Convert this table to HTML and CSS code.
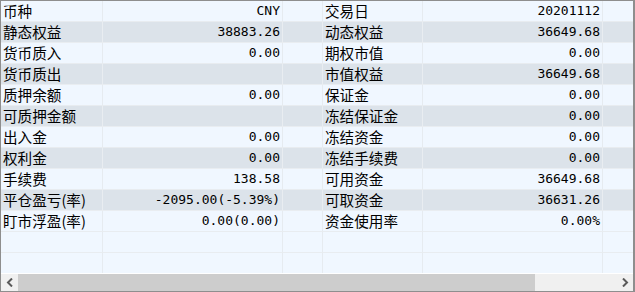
FILE: index.html
```html
<!DOCTYPE html>
<html lang="zh-CN">
<head>
<meta charset="utf-8">
<title>资金</title>
<link rel="stylesheet" href="styles.css">
</head>
<body>
<div class="panel">
  <div class="rows">
    <div class="row"><div class="c lbl">币种</div><div class="c val">CNY</div><div class="c gap"></div><div class="c lbl">交易日</div><div class="c val">20201112</div><div class="c tail"></div></div>
    <div class="row alt"><div class="c lbl">静态权益</div><div class="c val">38883.26</div><div class="c gap"></div><div class="c lbl">动态权益</div><div class="c val">36649.68</div><div class="c tail"></div></div>
    <div class="row"><div class="c lbl">货币质入</div><div class="c val">0.00</div><div class="c gap"></div><div class="c lbl">期权市值</div><div class="c val">0.00</div><div class="c tail"></div></div>
    <div class="row alt"><div class="c lbl">货币质出</div><div class="c val"></div><div class="c gap"></div><div class="c lbl">市值权益</div><div class="c val">36649.68</div><div class="c tail"></div></div>
    <div class="row"><div class="c lbl">质押余额</div><div class="c val">0.00</div><div class="c gap"></div><div class="c lbl">保证金</div><div class="c val">0.00</div><div class="c tail"></div></div>
    <div class="row alt"><div class="c lbl">可质押金额</div><div class="c val"></div><div class="c gap"></div><div class="c lbl">冻结保证金</div><div class="c val">0.00</div><div class="c tail"></div></div>
    <div class="row"><div class="c lbl">出入金</div><div class="c val">0.00</div><div class="c gap"></div><div class="c lbl">冻结资金</div><div class="c val">0.00</div><div class="c tail"></div></div>
    <div class="row alt"><div class="c lbl">权利金</div><div class="c val">0.00</div><div class="c gap"></div><div class="c lbl">冻结手续费</div><div class="c val">0.00</div><div class="c tail"></div></div>
    <div class="row"><div class="c lbl">手续费</div><div class="c val">138.58</div><div class="c gap"></div><div class="c lbl">可用资金</div><div class="c val">36649.68</div><div class="c tail"></div></div>
    <div class="row alt"><div class="c lbl">平仓盈亏(率)</div><div class="c val">-2095.00(-5.39%)</div><div class="c gap"></div><div class="c lbl">可取资金</div><div class="c val">36631.26</div><div class="c tail"></div></div>
    <div class="row"><div class="c lbl">盯市浮盈(率)</div><div class="c val">0.00(0.00)</div><div class="c gap"></div><div class="c lbl">资金使用率</div><div class="c val">0.00%</div><div class="c tail"></div></div>
    <div class="row"><div class="c lbl"></div><div class="c val"></div><div class="c gap"></div><div class="c lbl"></div><div class="c val"></div><div class="c tail"></div></div>
    <div class="row"><div class="c lbl"></div><div class="c val"></div><div class="c gap"></div><div class="c lbl"></div><div class="c val"></div><div class="c tail"></div></div>
  </div>
  <div class="hscroll">
    <div class="sbtn"><svg width="8" height="9" viewBox="0 0 8 9"><path d="M6 0.5 L2 4.5 L6 8.5" fill="none" stroke="#5a5a5a" stroke-width="2"/></svg></div>
    <div class="track"><div class="thumb"></div></div>
    <div class="sbtn"><svg width="8" height="9" viewBox="0 0 8 9"><path d="M2 0.5 L6 4.5 L2 8.5" fill="none" stroke="#5a5a5a" stroke-width="2"/></svg></div>
  </div>
</div>
</body>
</html>
```
FILE: styles.css
```css
html, body {
  margin: 0;
  padding: 0;
  background: #ffffff;
}
.panel {
  width: 635px;
  height: 292px;
  box-sizing: border-box;
  border: 1px solid #8e8e8e;
  border-right-width: 2px;
  display: flex;
  flex-direction: column;
  overflow: hidden;
  background: #ffffff;
}
.rows {
  flex: 1;
  overflow: hidden;
}
.row {
  display: grid;
  grid-template-columns: 102px 180px 40px 100px 180px 80px;
  height: 21px;
  background: #f0f7ff;
}
.row.alt {
  background: #dce3ea;
}
.c {
  box-sizing: border-box;
  height: 21px;
  border-right: 1px solid #e6ebf0;
  border-bottom: 1px solid #e8ecf0;
  line-height: 20px;
  white-space: nowrap;
  overflow: hidden;
  color: #000000;
}
.row.alt .c {
  border-color: #e9edf1;
}
.lbl {
  font-family: "Noto Sans CJK SC", "Noto Sans", sans-serif;
  font-size: 14.6px;
  padding: 0 0 0 2px;
}
.val {
  font-family: "DejaVu Sans Mono", "Liberation Mono", monospace;
  font-size: 13px;
  text-align: right;
  padding: 0 2px 0 0;
}
.hscroll {
  height: 17px;
  border-top: 1px solid #ffffff;
  display: flex;
  background: #f0f0f0;
  flex: none;
}
.sbtn {
  width: 17px;
  flex: none;
  display: flex;
  align-items: center;
  justify-content: center;
}
.track {
  flex: 1;
  display: flex;
}
.thumb {
  width: 517px;
  background: #cdcdcd;
}
```
